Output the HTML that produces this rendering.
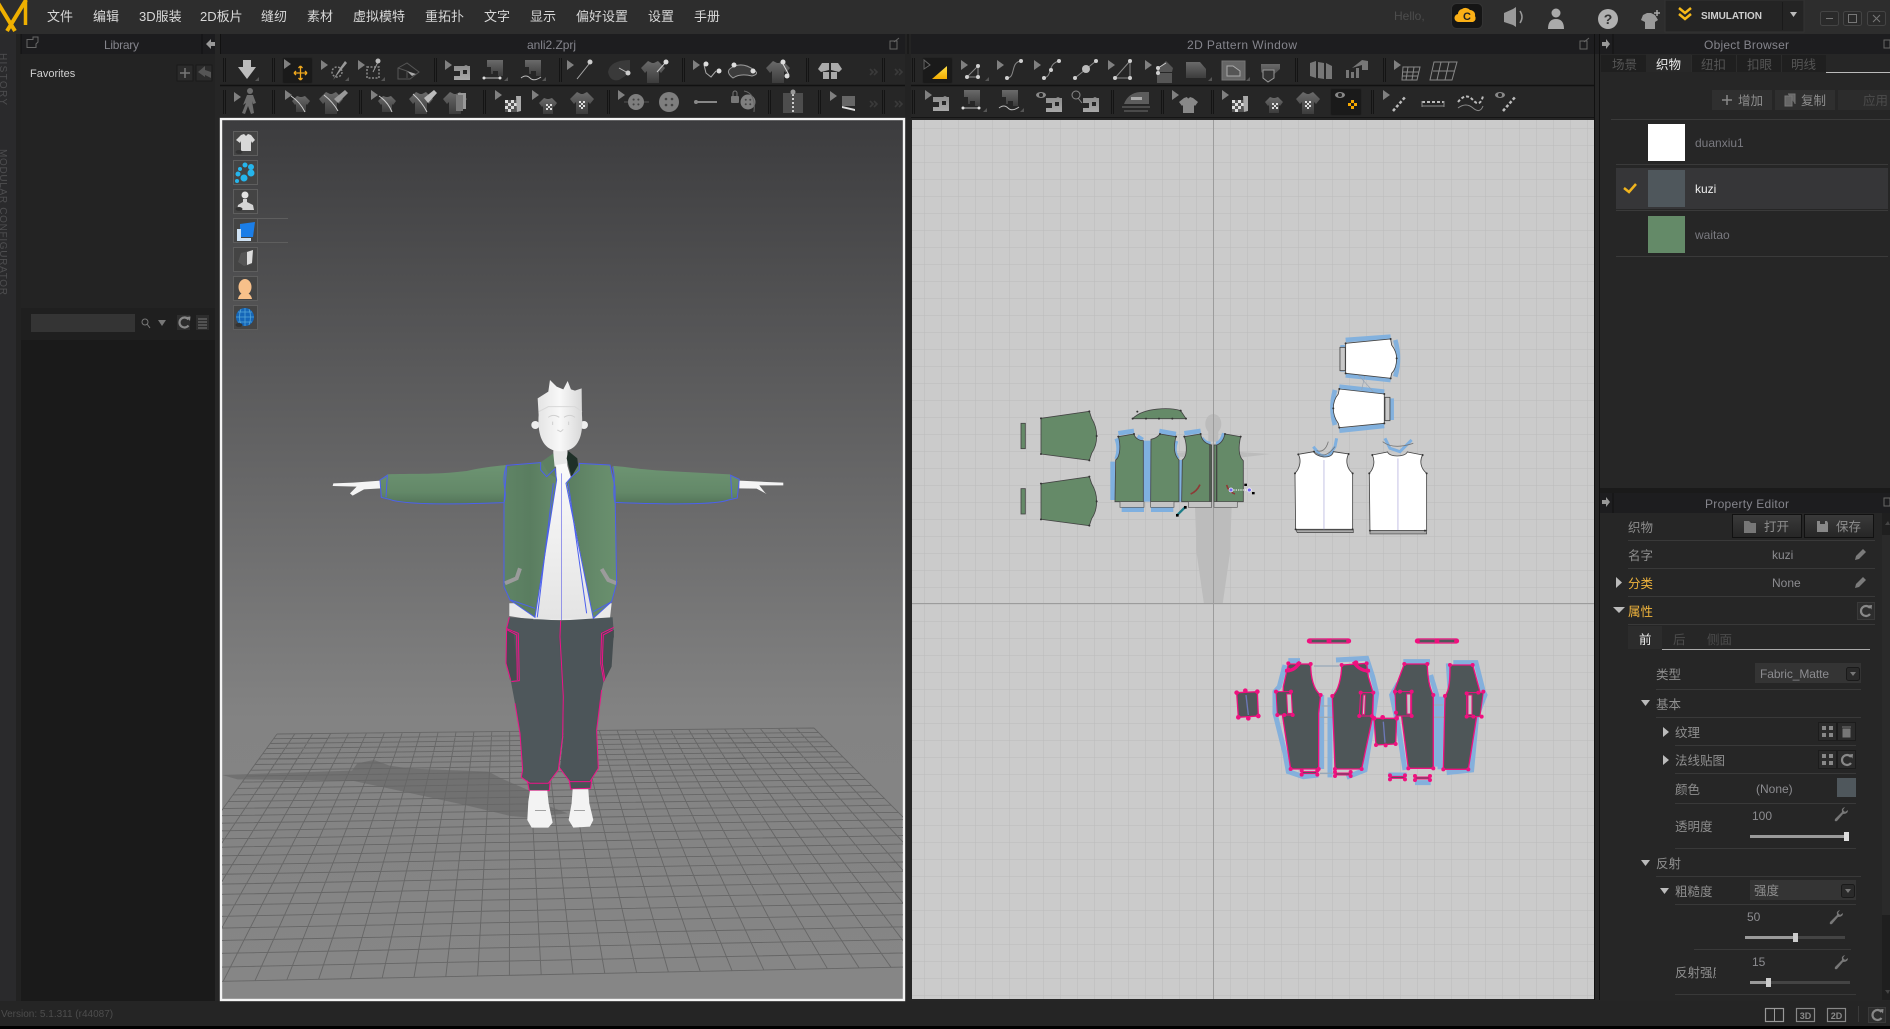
<!DOCTYPE html>
<html><head><meta charset="utf-8"><title>Marvelous Designer</title>
<style>
html,body{margin:0;padding:0;background:#262626;overflow:hidden}
svg{display:block}
text{font-family:"Liberation Sans","WenQuanYi Zen Hei",sans-serif;font-size:12px;fill:#8c8c8c}
.m{font-family:"Liberation Sans","WenQuanYi Zen Hei",sans-serif;font-size:13px;fill:#d8d8d8}
.c{font-size:12.5px;font-family:"Liberation Sans","WenQuanYi Zen Hei",sans-serif;fill:#8e8e8e}
.t{fill:#85858c}
</style></head><body>
<svg width="1890" height="1029" viewBox="0 0 1890 1029" xmlns="http://www.w3.org/2000/svg">
<defs>
<linearGradient id="vp" x1="0" y1="118" x2="0" y2="1001" gradientUnits="userSpaceOnUse"><stop offset="0" stop-color="#3c3c3e"/><stop offset=".68" stop-color="#838383"/><stop offset="1" stop-color="#868686"/></linearGradient>
<linearGradient id="ig" x1="0" y1="0" x2="0" y2="1"><stop offset="0" stop-color="#6a6a6a"/><stop offset="1" stop-color="#3c3c3c"/></linearGradient>
<linearGradient id="il" x1="0" y1="0" x2="0" y2="1"><stop offset="0" stop-color="#8c8c8c"/><stop offset="1" stop-color="#a8a8a8"/></linearGradient>
<linearGradient id="btn" x1="0" y1="0" x2="0" y2="1"><stop offset="0" stop-color="#3a3a3a"/><stop offset="1" stop-color="#262626"/></linearGradient>
<linearGradient id="yl" x1="0" y1="0" x2="0" y2="1"><stop offset="0" stop-color="#ffe04a"/><stop offset="1" stop-color="#f2ab00"/></linearGradient>
<linearGradient id="head" x1="0" y1="0" x2="1" y2="0"><stop offset="0" stop-color="#e4e4e4"/><stop offset=".5" stop-color="#f8f8f8"/><stop offset="1" stop-color="#d8d8d8"/></linearGradient>
<linearGradient id="shirt3d" x1="0" y1="0" x2="0" y2="1"><stop offset="0" stop-color="#fafafa"/><stop offset="1" stop-color="#e4e4e4"/></linearGradient>
<linearGradient id="slv" x1="0" y1="0" x2="0" y2="1"><stop offset="0" stop-color="#6d9472"/><stop offset=".7" stop-color="#638868"/><stop offset="1" stop-color="#54755a"/></linearGradient>
<linearGradient id="jb" x1="0" y1="0" x2="1" y2="0"><stop offset="0" stop-color="#5f8465"/><stop offset=".5" stop-color="#5a7d60"/><stop offset="1" stop-color="#668b6b"/></linearGradient>
<linearGradient id="jc" x1="0" y1="0" x2="1" y2="0"><stop offset="0" stop-color="#5a7d60"/><stop offset=".6" stop-color="#658a6a"/><stop offset="1" stop-color="#6a906e"/></linearGradient>
<pattern id="grid" x="1213" y="604" width="17" height="17" patternUnits="userSpaceOnUse"><path d="M0 0H17M0 0V17" stroke="#bbb" stroke-width="1" fill="none"/></pattern>
<clipPath id="vc"><rect x="222" y="120" width="681" height="879"/></clipPath>
<clipPath id="pc"><rect x="912" y="120" width="682" height="879"/></clipPath>
<path id="cu" d="M0 0v10l7-5z" fill="#808080"/>
<path id="sw" d="M-8-7H2L4-8 6-7H8V7H-8V3H-2V-2H-8Z M1-3V1H5V-3Z" fill="url(#il)" fill-rule="evenodd"/>
<path id="swd" d="M-8-11H8V5H3V0H-2V3H-4V-4H-8Z" fill="url(#ig)"/>
<path id="sh" d="M-5-11-1-9H1L5-11 12-4 8 1 6-1V11H-6V-1L-8 1-12-4Z" fill="url(#ig)"/>
<path id="ss" d="M-4-8-1-7H1L4-8 9-3 6 1 5 0V8H-5V0L-6 1-9-3Z" fill="url(#ig)"/>
<g id="shk"><use href="#sh"/><path d="M-3-2h2v2h-2zM1-2h2v2H1zM-1 0h2v2h-2zM-3 2h2v2h-2zM1 2h2v2H1zM-1 4h2v2h-2z" fill="#ddd"/></g>
<g id="bt"><circle r="10" fill="#7e7e7e"/><circle cx="-3" cy="-3" r="1.3" fill="#444"/><circle cx="3" cy="-3" r="1.3" fill="#444"/><circle cx="-3" cy="3" r="1.3" fill="#444"/><circle cx="3" cy="3" r="1.3" fill="#444"/></g>
<g id="n"><circle r="2" fill="#cfcfcf"/></g>
<path id="chev" d="M0 0 3 3 0 6M4 0 7 3 4 6" fill="none" stroke="#3a3a3a" stroke-width="1.600"/>
<path id="wr" d="M1 12 8 5Q7 1 11 0L9 3 11 5 14 3Q14 7 9 7L3 14Q0 15 1 12Z" fill="#777"/>
<path id="pen" d="M0 12 1 8 8 1 11 4 4 11Z" fill="#7b7b7b"/>
<g id="rf"><path d="M4.500-3A5 5 0 1 0 4.500 3" stroke="#888" stroke-width="2.200" fill="none"/><path d="M2.500-5.500 6.500-6 6-1.500Z" fill="#888"/></g>
</defs>

<!-- base -->
<rect width="1890" height="1029" fill="#262626"/>
<rect x="0" y="0" width="1890" height="34" fill="#2d2d2d"/>
<rect x="0" y="34" width="16" height="967" fill="#2a2a2c"/>
<rect x="16" y="34" width="5" height="967" fill="#222"/>
<rect x="21" y="34" width="194" height="20" fill="#1c1c1e"/>
<rect x="21" y="54" width="194" height="254" fill="#232323"/>
<rect x="21" y="308" width="194" height="32" fill="#1f1f1f"/>
<rect x="21" y="340" width="194" height="661" fill="#1a1a1a"/>
<rect x="220" y="34" width="1380" height="20" fill="#1d1d1f"/>
<rect x="905" y="34" width="6" height="86" fill="#232323"/>
<path d="M908 34V54" stroke="#111"/>
<path d="M220 85.500H905M911 85.500H1594" stroke="#111" stroke-width="1.500"/>
<path d="M220 117.500H905M911 117.500H1594" stroke="#151515"/>
<path d="M21 34V54M220.500 34V54M1594.500 34V1000M1599.500 34V1000" stroke="#111"/>
<rect x="1600" y="34" width="290" height="20" fill="#1d1d1f"/>
<rect x="1600" y="488" width="290" height="5" fill="#1a1a1a"/>
<rect x="1600" y="493" width="290" height="20" fill="#1d1d1f"/>
<rect x="0" y="1001" width="1890" height="25" fill="#252525"/>
<rect x="0" y="1026" width="1890" height="3" fill="#000"/>

<!-- logo -->
<path d="M-2 3 15 31M26 0 7 31" stroke="#efb000" stroke-width="4" fill="none"/>
<path d="M25.500 0V25" stroke="#efb000" stroke-width="3.500" fill="none"/>

<!-- menu -->
<text class="m" x="47" y="21">文件</text><text class="m" x="93" y="21">编辑</text><text class="m" x="139" y="21">3D服装</text><text class="m" x="200" y="21">2D板片</text><text class="m" x="261" y="21">缝纫</text><text class="m" x="307" y="21">素材</text><text class="m" x="353" y="21">虚拟模特</text><text class="m" x="425" y="21">重拓扑</text><text class="m" x="484" y="21">文字</text><text class="m" x="530" y="21">显示</text><text class="m" x="576" y="21">偏好设置</text><text class="m" x="648" y="21">设置</text><text class="m" x="694" y="21">手册</text>

<!-- top right -->
<text x="1394" y="20" style="fill:#4d4d4d">Hello,</text>
<rect x="1451.500" y="3.500" width="31" height="25" rx="5" fill="#151515" stroke="#333"/>
<path d="M1459 22a4 4 0 0 1-1-8 5 5 0 0 1 4-5 6 6 0 0 1 8 1 5 5 0 0 1 5 6 4 4 0 0 1-2 6Z" fill="#fbb016"/>
<text x="1467" y="20" text-anchor="middle" style="font-weight:bold;font-size:11px;fill:#222">C</text>
<path d="M1504 13 1513 9 1516 7V27L1513 25 1504 22Z" fill="#999"/><path d="M1520 11Q1524 17 1520 23" stroke="#999" stroke-width="1.500" fill="none"/>
<circle cx="1556" cy="13" r="4.500" fill="#aaa"/><path d="M1548 29Q1548 19 1556 19 1564 19 1564 29Z" fill="#aaa"/>
<circle cx="1608" cy="19" r="10" fill="#b0b0b0"/><text x="1608" y="24" text-anchor="middle" style="font-weight:bold;font-size:14px;fill:#333">?</text>
<path d="M1643 15 1647 13H1651L1655 15 1658 20 1655 22V29H1645V22L1641 20Z" fill="#9a9a9a"/><path d="M1654 13H1660M1657 10V16" stroke="#aaa" stroke-width="1.500"/>
<rect x="1665" y="0" width="139" height="32" fill="#242424" stroke="#333"/>
<path d="M1679 8 1685 13 1691 8M1679 14 1685 19 1691 14" stroke="#f6b91a" stroke-width="2.500" fill="none"/>
<text x="1701" y="19" textLength="61" style="font-weight:bold;font-size:10px;fill:#cfcfcf">SIMULATION</text>
<path d="M1782.500 2V30" stroke="#1a1a1a"/><path d="M1790 12H1797L1793.500 17Z" fill="#bbb"/>
<g fill="#2a2a2a" stroke="#444"><rect x="1820.500" y="11.500" width="18" height="14" rx="2"/><rect x="1843.500" y="11.500" width="18" height="14" rx="2"/><rect x="1867.500" y="11.500" width="18" height="14" rx="2"/></g>
<path d="M1826 18.500H1833M1848.500 14.500H1856.500V22.500H1848.500ZM1873 15 1880 22M1880 15 1873 22" stroke="#777" fill="none"/>

<!-- vertical labels -->
<text transform="translate(0,53) rotate(90)" textLength="52" style="font-size:10px;fill:#4e4e50">HISTORY</text>
<text transform="translate(0,149) rotate(90)" textLength="146" style="font-size:10px;fill:#4e4e50">MODULAR CONFIGURATOR</text>

<!-- panel titles -->
<path d="M27 39.500H33V37H38V42L36 44V47.500H27Z" fill="none" stroke="#666" stroke-width="1"/>
<text x="104" y="49" class="t" textLength="35">Library</text>
<path d="M206 44 211 39V42H215V46H211V49Z" fill="#999"/><path d="M202 34V54" stroke="#111"/>
<text x="527" y="49" class="t" textLength="49">anli2.Zprj</text>
<path d="M890 41H897V49H890ZM894 42 899 38" stroke="#666" fill="none"/>
<text x="1187" y="49" class="t" textLength="110">2D Pattern Window</text>
<path d="M1580 41H1587V49H1580ZM1584 42 1589 38" stroke="#666" fill="none"/>
<path d="M1602 42H1606V39L1610 44 1606 49V46H1602Z" fill="#999"/><path d="M1613 34V54" stroke="#111"/>
<text x="1704" y="49" class="t" textLength="85">Object Browser</text>
<path d="M1884 40H1890V48H1884Z" stroke="#666" fill="none"/>
<path d="M1602 500H1606V497L1610 502 1606 507V504H1602Z" fill="#999"/><path d="M1613 493V513" stroke="#111"/>
<text x="1705" y="508" class="t" textLength="84">Property Editor</text>
<path d="M1884 498H1890V506H1884Z" stroke="#666" fill="none"/>

<!-- library -->
<text x="30" y="77" style="fill:#d0d0d0;font-size:11px">Favorites</text>
<rect x="177" y="65" width="16" height="16" fill="#2b2b2b" stroke="#1a1a1a"/><path d="M180 73H190M185 68V78" stroke="#777" stroke-width="1.500"/>
<rect x="196" y="65" width="16" height="16" fill="#2b2b2b" stroke="#1a1a1a"/><path d="M198 72 205 66V70L211 72V78L205 75V77Z" fill="#555"/>
<rect x="31" y="314" width="104" height="18" fill="#343434"/>
<circle cx="145" cy="322" r="3" fill="none" stroke="#777"/><path d="M147 324 150 328" stroke="#777"/><path d="M158 320H166L162 326Z" fill="#777"/>
<rect x="177" y="315" width="13" height="15" fill="#2d2d2d"/><use href="#rf" x="184" y="322.500"/>
<rect x="196" y="315" width="13" height="15" fill="#2d2d2d"/><path d="M198 319H207M198 322H207M198 325H207M198 328H207" stroke="#777"/>

<!-- toolbars separators -->
<path d="M223.500 58V82M225.500 58V82M272.500 58V82M274.500 58V82M434.500 58V82M436.500 58V82M559.500 58V82M561.500 58V82M682.500 58V82M684.500 58V82M806.500 58V82M808.500 58V82M882.500 58V82M884.500 58V82M912.500 58V82M914.500 58V82M1295.500 58V82M1297.500 58V82M1383.500 58V82M1385.500 58V82M223.500 90V114M225.500 90V114M272.500 90V114M274.500 90V114M359.500 90V114M361.500 90V114M483.500 90V114M485.500 90V114M607.500 90V114M609.500 90V114M768.500 90V114M770.500 90V114M818.500 90V114M820.500 90V114M882.500 90V114M884.500 90V114M912.500 90V114M914.500 90V114M1111.500 90V114M1113.500 90V114M1161.500 90V114M1163.500 90V114M1211.500 90V114M1213.500 90V114M1371.500 90V114M1373.500 90V114" stroke="#141414"/>

<!-- row 1 viewport -->
<path d="M243 60H251V67H256L247 79 238 67H243Z" fill="#bcbcbc"/><path d="M255 81 259 77V81Z" fill="#555"/>
<rect x="282.500" y="57.500" width="30" height="26" rx="2" fill="#1a1a1a" stroke="#232323"/>
<use href="#cu" x="284" y="59"/>
<path d="M294 73H307M300.500 66V80M294 73 296 71M294 73 296 75M307 73 305 71M307 73 305 75M300.500 66 298.500 68M300.500 66 302.500 68M300.500 80 298.500 78M300.500 80 302.500 78" stroke="#f0a91e" stroke-width="1.300" fill="none"/>
<use href="#cu" x="321" y="60"/><circle cx="337" cy="72" r="5" fill="none" stroke="#888" stroke-dasharray="2 1.500" stroke-width="1.500"/><path d="M333 80 347 63 345 61 340 68Z" fill="#999"/><path d="M345 81 349 77V81Z" fill="#555"/>
<use href="#cu" x="358" y="60"/><path d="M367 67H379V78H367Z" fill="none" stroke="#888" stroke-dasharray="2 1.500" stroke-width="1.500"/><path d="M373 72 378 62" stroke="#999"/><circle cx="378" cy="61" r="2.500" fill="#bbb"/><path d="M381 81 385 77V81Z" fill="#555"/>
<path d="M398 68 407 63 419 72 410 79 398 79Z M398 68 407 71 407 78" fill="none" stroke="#555"/><path d="M407 71 416 74 412 76Z" fill="#aaa"/>
<use href="#cu" x="445" y="60"/><use href="#sw" x="462" y="73"/>
<use href="#swd" x="495" y="71"/><path d="M484 78H500" stroke="#bbb"/><circle cx="484" cy="78" r="1.500" fill="#ddd"/><circle cx="500" cy="78" r="1.500" fill="#ddd"/><path d="M504 81 508 77V81Z" fill="#555"/>
<use href="#swd" x="533" y="71"/><path d="M521 78Q526 74 530 78T541 77" stroke="#bbb" fill="none"/><path d="M542 81 546 77V81Z" fill="#555"/>
<use href="#cu" x="567" y="60"/><path d="M577 79 589 64" stroke="#aaa"/><circle cx="590" cy="62" r="2.500" fill="#ccc"/>
<path d="M608 72Q610 60 630 60V73L619 80Q610 82 608 72Z" fill="#3a3a3a"/><path d="M619 68 628 73" stroke="#bbb"/><circle cx="628" cy="73" r="2.500" fill="#ccc"/>
<use href="#sh" x="653" y="72"/><path d="M657 72 666 62" stroke="#ccc"/><circle cx="666" cy="62" r="2.500" fill="#ddd"/>
<use href="#cu" x="693" y="60"/><path d="M704 65 706 73 711 77 716 71" stroke="#aaa" fill="none"/><circle cx="706" cy="64" r="2.500" fill="#ddd"/><circle cx="719" cy="71" r="2.500" fill="#ddd"/>
<path d="M731 68Q742 61 754 70 760 74 752 76 740 73 733 78 725 72 731 68Z" fill="#3c3c3c" stroke="#999"/><circle cx="734" cy="65" r="2.500" fill="#ddd"/><circle cx="753" cy="71" r="2.500" fill="#ddd"/>
<use href="#sh" x="778" y="72"/><path d="M783 64 789 75" stroke="#ddd"/><circle cx="783" cy="62" r="2.500" fill="#ddd"/><circle cx="787" cy="76" r="2.500" fill="#ddd"/>
<path d="M829 63 822 63 818 69 821 72 829 70ZM831 63 838 63 842 69 839 72 831 70ZM823 72H829V79H823ZM831 72H837V79H831Z" fill="#aaa"/>
<use href="#chev" x="870" y="69"/><use href="#chev" x="895" y="69"/>

<!-- row 2 viewport -->
<use href="#cu" x="234" y="92"/><circle cx="250" cy="91" r="3" fill="#6e6e6e"/><path d="M247 95 253 95 256 103 253 104 252 101 254 113 251 114 248 106 245 114 242 113 246 103 243 105Z" fill="#6e6e6e"/>
<use href="#cu" x="285" y="90"/><use href="#ss" x="301" y="104"/><path d="M291 96Q300 102 305 112" stroke="#ccc" fill="none"/>
<use href="#sh" x="331" y="103"/><path d="M324 95Q333 102 338 111" stroke="#ccc" fill="none"/><path d="M334 99 345 90 348 93 338 103Z" fill="#999"/>
<use href="#cu" x="371" y="90"/><use href="#ss" x="387" y="104"/><path d="M379 96Q388 102 392 112" stroke="#ccc" fill="none"/>
<use href="#sh" x="421" y="103"/><path d="M413 94Q422 102 427 112" stroke="#ccc" fill="none"/><path d="M424 98 434 90 437 93 428 103Z" fill="#bbb"/>
<use href="#sh" x="455" y="103"/><path d="M458 93H466V109H458Z" fill="#999"/><path d="M456 95H463V111H456Z" fill="#777"/>
<use href="#cu" x="495" y="90"/><path d="M505 100H517V112H505Z" fill="#555"/><path d="M505 100h3v3h-3zM511 100h3v3h-3zM508 103h3v3h-3zM514 103h3v3h-3zM505 106h3v3h-3zM511 106h3v3h-3zM508 109h3v3h-3z" fill="#ddd"/><path d="M516 96H521V111L517 112Z" fill="#aaa"/>
<use href="#cu" x="532" y="90"/><use href="#ss" x="548" y="106"/><path d="M546 104h2v2h-2zM550 104h2v2h-2zM548 106h2v2h-2zM546 108h2v2h-2zM550 108h2v2h-2z" fill="#ddd"/>
<use href="#shk" x="582" y="103"/>
<use href="#cu" x="618" y="90"/><g transform="translate(636,102) scale(.8)"><use href="#bt"/></g><path d="M624 102H628M644 102H649" stroke="#555"/>
<use href="#bt" x="669" y="102"/>
<path d="M696 102H717" stroke="#888" stroke-width="2"/><circle cx="696" cy="102" r="2" fill="#888"/>
<rect x="731" y="96" width="8" height="7" rx="1" fill="#777"/><path d="M733 96V93A2 2 0 0 1 737 93V96" stroke="#777" fill="none"/><g transform="translate(748,102) scale(.75)"><use href="#bt"/></g><path d="M744 91Q756 93 754 112" stroke="#666" fill="none"/>
<rect x="783" y="93" width="20" height="20" fill="#4d4d4d"/><path d="M793 90V112" stroke="#ccc" stroke-width="2" stroke-dasharray="2 2"/><circle cx="793" cy="92" r="2.500" fill="#999"/>
<use href="#cu" x="830" y="91"/><path d="M842 96H855V106H842Z" fill="#666"/><path d="M842 106 855 109V111L842 108Z" fill="#ddd"/>
<use href="#chev" x="870" y="101"/><use href="#chev" x="895" y="101"/>

<!-- 2D row 1 -->
<rect x="922.500" y="57.500" width="30" height="26" rx="2" fill="#1a1a1a" stroke="#232323"/>
<path d="M924 60V69L930 65Z" fill="none" stroke="#666"/>
<path d="M932 79 947 66V79Z" fill="url(#yl)"/>
<use href="#cu" x="961" y="60"/><path d="M967 77 978 66V77Z" fill="none" stroke="#888"/><use href="#n" x="967" y="77"/><use href="#n" x="978" y="66"/><use href="#n" x="978" y="77"/><path d="M985 81 989 77V81Z" fill="#555"/>
<use href="#cu" x="997" y="60"/><path d="M1007 78C1016 78 1010 62 1021 61" stroke="#888" fill="none"/><use href="#n" x="1007" y="78"/><use href="#n" x="1021" y="61"/>
<use href="#cu" x="1034" y="60"/><path d="M1044 78C1053 76 1047 64 1059 61" stroke="#888" fill="none"/><use href="#n" x="1044" y="78"/><use href="#n" x="1051" y="70"/><use href="#n" x="1059" y="61"/>
<path d="M1075 78 1096 61" stroke="#888"/><use href="#n" x="1075" y="78"/><use href="#n" x="1096" y="61"/><circle cx="1086" cy="69" r="4" fill="#bbb"/>
<use href="#cu" x="1108" y="60"/><path d="M1115 78H1130L1130 61Z" fill="none" stroke="#888"/><use href="#n" x="1115" y="78"/><use href="#n" x="1130" y="61"/><use href="#n" x="1130" y="78"/>
<use href="#cu" x="1145" y="60"/><path d="M1157 73H1172V83H1157Z" fill="#555"/><path d="M1158 69 1166 61 1173 68 1172 72H1158Z" fill="#555"/><path d="M1158 68 1158 73M1158 68 1166 63" stroke="#ccc"/><use href="#n" x="1158" y="68"/><use href="#n" x="1158" y="73"/>
<path d="M1186 62H1200L1206 69V78H1186Z" fill="url(#ig)"/><path d="M1208 81 1212 77V81Z" fill="#555"/>
<rect x="1222" y="61" width="23" height="19" fill="#666" stroke="#777"/><path d="M1227 66H1233L1240 71V76H1227Z" fill="#555" stroke="#aaa"/><path d="M1246 81 1250 77V81Z" fill="#555"/>
<path d="M1261 64H1280V69L1270 78 1261 72Z" fill="url(#ig)"/><path d="M1263 70H1274V78L1268 82 1263 78Z" fill="#333" stroke="#999"/>
<path d="M1310 63 1316 61V78L1310 76ZM1318 62 1324 63V79L1318 78ZM1326 63 1332 66V79L1326 79Z" fill="#777"/>
<path d="M1346 70H1349V78H1346ZM1351 72H1354V78H1351ZM1356 68H1359V78H1356ZM1352 68 1362 60 1368 61V70H1362V65Z" fill="#777"/>
<use href="#cu" x="1394" y="60"/><path d="M1403 67H1420L1417 80H1402ZM1408 67 1406 80M1414 67 1412 80M1403 72H1419M1402 76H1418" stroke="#888" fill="none"/>
<path d="M1434 62H1457L1452 80H1430ZM1441 62 1437 80M1449 62 1445 80M1433 71H1455" stroke="#888" fill="none"/>

<!-- 2D row 2 -->
<use href="#cu" x="925" y="90"/><use href="#sw" x="941" y="104"/>
<use href="#swd" x="972" y="101"/><path d="M963 108H979" stroke="#bbb"/><circle cx="963" cy="108" r="1.500" fill="#ddd"/><circle cx="979" cy="108" r="1.500" fill="#ddd"/><path d="M983 112 987 108V112Z" fill="#555"/>
<use href="#swd" x="1010" y="101"/><path d="M999 108Q1004 104 1008 108T1019 107" stroke="#bbb" fill="none"/><path d="M1020 112 1024 108V112Z" fill="#555"/>
<ellipse cx="1041" cy="95" rx="5" ry="3" fill="#888"/><circle cx="1041" cy="95" r="2" fill="#222"/><use href="#sw" x="1054" y="105"/>
<circle cx="1076" cy="95" r="4" fill="none" stroke="#888"/><path d="M1078 98 1082 103" stroke="#888"/><use href="#sw" x="1091" y="105"/>
<path d="M1124 104Q1128 93 1140 92H1149V104Z" fill="#5c5c5c"/><path d="M1122 106H1150V108H1122ZM1124 110H1148V112H1124Z" fill="#4a4a4a"/><path d="M1131 97H1142V100H1131Z" fill="#aaa"/>
<use href="#cu" x="1172" y="90"/><path d="M1184 98 1187 97Q1188 100 1190 97L1193 98 1198 102 1195 106 1194 105V113H1183V105L1182 106 1179 102Z" fill="#888"/>
<use href="#cu" x="1222" y="90"/><path d="M1232 100H1244V112H1232Z" fill="#555"/><path d="M1232 100h3v3h-3zM1238 100h3v3h-3zM1235 103h3v3h-3zM1241 103h3v3h-3zM1232 106h3v3h-3zM1238 106h3v3h-3zM1235 109h3v3h-3z" fill="#ddd"/><path d="M1243 96H1248V111L1244 112Z" fill="#aaa"/>
<use href="#ss" x="1274" y="105"/><path d="M1272 103h2v2h-2zM1276 103h2v2h-2zM1274 105h2v2h-2zM1272 107h2v2h-2zM1276 107h2v2h-2z" fill="#ddd"/><use href="#shk" x="1308" y="103"/>
<rect x="1330.500" y="88.500" width="31" height="27" rx="2" fill="#1a1a1a" stroke="#232323"/>
<ellipse cx="1340" cy="95" rx="5" ry="3" fill="#888"/><circle cx="1340" cy="95" r="2" fill="#222"/>
<path d="M1351 100h3v3h-3zM1348 103h3v3h-3zM1354 103h3v3h-3zM1351 106h3v3h-3z" fill="#f6a800"/>
<use href="#cu" x="1383" y="90"/><path d="M1393 111 1406 96" stroke="#bbb" stroke-width="2.500" stroke-dasharray="3 2"/>
<path d="M1422 102H1444" stroke="#bbb" stroke-width="2" stroke-dasharray="3 2"/><path d="M1422 106H1444M1422 101V107M1444 101V107" stroke="#888"/>
<path d="M1458 102Q1466 92 1473 100T1483 96" stroke="#bbb" stroke-width="2" stroke-dasharray="3 2" fill="none"/><path d="M1458 108Q1466 102 1473 108T1483 106" stroke="#888" fill="none"/>
<ellipse cx="1500" cy="95" rx="5" ry="3" fill="#888"/><circle cx="1500" cy="95" r="2" fill="#222"/><path d="M1503 111 1516 96" stroke="#bbb" stroke-width="2.500" stroke-dasharray="3 2"/>

<!-- viewport -->
<rect x="221" y="119" width="683" height="881" fill="url(#vp)" stroke="#f4f4f4" stroke-width="2.400"/>
<g clip-path="url(#vc)">
<path transform="translate(220,700) scale(.4401,.3333)" d="M5 225 300 212 312 190 350 180 385 197 432 206 610 215 640 236 700 270 750 320 790 340 700 352 660 348 560 316 400 270 300 242 40 238Z" fill="#5a5a5a" opacity=".45"/>
<path fill="none" stroke="#666" stroke-width=".9" d="M277 734 814 728M273.600 738.700 818.400 732.400M270.100 743.500 823 737M266.500 748.500 827.700 741.700M262.700 753.700 832.600 746.600M258.900 759 837.600 751.600M254.900 764.500 842.800 756.800M250.800 770.200 848.100 762.100M246.600 776 853.700 767.700M242.200 782.100 859.400 773.400M237.700 788.400 865.300 779.300M232.900 794.900 871.400 785.400M228.100 801.600 877.800 791.800M223 808.600 884.400 798.400M217.800 815.800 891.200 805.200M212.400 823.300 898.300 812.300M206.700 831.100 905.600 819.600M200.800 839.200 913.300 827.300M194.700 847.600 921.300 835.300M188.400 856.400 929.600 843.600M181.700 865.600 938.200 852.200M174.800 875.100 947.200 861.200M167.600 885.100 956.600 870.600M160.100 895.500 966.500 880.500M152.200 906.400 976.800 890.800M143.900 917.800 987.500 901.500M135.300 929.800 998.800 912.800M126.200 942.300 1010.700 924.700M116.600 955.500 1023.100 937.100M106.600 969.400 1036.200 950.200M96 984 1050 964
M277 734 96 984M294.900 733.800 127.800 983.300M312.800 733.600 159.600 982.700M330.700 733.400 191.400 982M348.600 733.200 223.200 981.300M366.500 733 255 980.700M384.400 732.800 286.800 980M402.300 732.600 318.600 979.300M420.200 732.400 350.400 978.700M438.100 732.200 382.200 978M456 732 414 977.300M473.900 731.800 445.800 976.700M491.800 731.600 477.600 976M509.700 731.400 509.400 975.300M527.600 731.200 541.200 974.700M545.500 731 573 974M563.400 730.800 604.800 973.300M581.300 730.600 636.600 972.700M599.200 730.400 668.400 972M617.100 730.200 700.200 971.300M635 730 732 970.700M652.900 729.800 763.800 970M670.800 729.600 795.600 969.300M688.700 729.400 827.400 968.700M706.600 729.200 859.200 968M724.500 729 891 967.300M742.400 728.800 922.800 966.700M760.300 728.600 954.600 966M778.200 728.400 986.400 965.300M796.100 728.200 1018.200 964.700M814 728 1050 964"/>

<!-- figure (zoom 5 coords) -->
<g transform="translate(300,370) scale(.3333)">
<!-- hands -->
<path d="M242 332 160 338 100 340 98 348 170 350 150 370 158 377 192 358 242 355Z" fill="#f4f4f4"/>
<path d="M1318 332 1400 336 1450 338 1450 346 1378 346 1395 368 1400 372 1370 356 1318 355Z" fill="#f4f4f4"/>
<!-- shirt back band -->
<path d="M628 700 935 700 930 745 880 750 700 750 628 738Z" fill="#e9e9e9"/>
<!-- pants -->
<path d="M628 742 620 775 618 880 632 930 645 1000 660 1090 668 1200 664 1222 690 1240 745 1240 775 1200 788 1100 790 980 780 800 782 752Z" fill="#4e575b"/>
<path d="M782 752 775 800 790 980 790 1100 780 1195 810 1235 870 1235 895 1195 890 1080 905 960 942 800 938 742Z" fill="#4c5559"/>
<path d="M682 1232 750 1238 748 1262 688 1262ZM808 1230 875 1230 872 1255 812 1257Z" fill="#4a5256"/>
<path d="M640 780 655 930 630 930 618 880 620 780ZM905 785 942 780 935 890 912 935 905 900Z" fill="#454d50"/>
<g fill="none" stroke="#f0128a" stroke-width="3">
<path d="M628 742 620 775 618 880 632 930M645 1000 660 1090 668 1200 664 1222 690 1240 745 1240 775 1200 788 1100 790 980 780 800 782 752M780 1195 810 1235 870 1235 895 1195 890 1080 905 960"/>
<path d="M682 1232 688 1262 748 1262 750 1238M808 1232 812 1257 872 1255 875 1230"/>
<path d="M618 775 655 790 658 932 634 935M622 780 650 795 652 930"/>
<path d="M942 772 905 790 902 880 912 935M938 780 910 795 907 880 915 930"/>
</g>
<!-- shoes -->
<path d="M690 1262 742 1262 746 1300 758 1358 745 1373 695 1373 682 1350 685 1295Z" fill="#f3f3f3"/>
<path d="M818 1258 865 1258 868 1300 880 1350 870 1370 820 1373 806 1350 815 1300Z" fill="#f3f3f3"/>
<path d="M705 1322H738M822 1322H855" stroke="#888" stroke-width="2"/>
<!-- head -->
<circle cx="706" cy="165" r="12" fill="#eee"/><circle cx="852" cy="165" r="12" fill="#eee"/>
<rect x="760" y="235" width="42" height="55" fill="#e8e8e8"/>
<path d="M716 135C712 190 725 244 782 244 840 244 850 190 846 135L845 55 825 62 813 58 803 33 790 58 770 50 750 30 745 65 713 85Z" fill="url(#head)"/>
<path d="M716 125 745 110 825 110 846 125" stroke="#d8d8d8" stroke-width="3" fill="none"/>
<path d="M745 142Q760 130 778 142M792 142Q810 130 825 142M758 155V165M806 155V165M772 180 782 185 790 178" stroke="#d0d0d0" stroke-width="3" fill="none"/>
<!-- shirt -->
<path d="M768 285 800 280 818 340 882 745 700 748 770 330Z" fill="url(#shirt3d)"/>
<path d="M785 310V750" stroke="#6a6ae8" stroke-width="2"/>
<path d="M805 243 832 265 836 300 815 322 800 265Z" fill="#1f3028"/>
<!-- jacket -->
<path d="M622 285 C590 288 560 290 500 303 C400 315 330 310 262 313 L240 330 244 382 268 387 C300 400 400 406 615 398Z" fill="url(#slv)"/>
<path d="M940 288 C980 290 1010 298 1100 303 L1290 313 1318 328 1310 384 1285 390 C1250 404 1100 404 945 397Z" fill="url(#slv)"/>
<path d="M725 275 620 290 612 400 612 650 630 690 705 742 770 330 765 300 740 285Z" fill="url(#jb)"/>
<path d="M838 280 930 285 945 350 950 640 935 695 880 745 800 340 815 320Z" fill="url(#jc)"/>
<path d="M725 275 760 250 765 300 770 325 745 310Z" fill="#5e8062"/>
<path d="M615 640 650 625 660 595M905 597 925 630 950 640" stroke="#9b9b9b" stroke-width="12" fill="none"/>
<g fill="none" stroke="#4c60ee" stroke-width="3">
<path d="M722 278 620 286 612 400 612 650 630 690 705 742 770 330 765 296 740 320 722 300Z"/>
<path d="M838 280 930 285 945 350 950 640 935 695 880 745 798 340 815 320 838 300Z"/>
<path d="M620 285 C600 340 625 360 612 398 C400 406 300 400 268 388 L244 382 240 330 262 316 258 382M938 290 C950 340 935 360 945 397 C1100 404 1250 404 1285 390 L1312 384 1318 328 1292 316 1296 384"/>
<path d="M632 690 705 715M935 695 880 725M760 340 712 742M805 340 860 730"/>
</g>
</g>
</g>

<!-- side icons -->
<g fill="#444" stroke="#5e5e5e"><rect x="233.500" y="131.500" width="24" height="24"/><rect x="233.500" y="160.500" width="24" height="24"/><rect x="233.500" y="189.500" width="24" height="24"/><rect x="233.500" y="218.500" width="24" height="24"/><rect x="233.500" y="247.500" width="24" height="24"/><rect x="233.500" y="276.500" width="24" height="24"/><rect x="233.500" y="305.500" width="24" height="24"/></g>
<path d="M258 218.500H288M258 242.500H288" stroke="#5e5e5e"/>
<path d="M241 135 244 134 246 136 248 134 251 135 255 140 252 143 251 141V151H241V141L240 143 236 140Z" fill="#d8d8d8"/>
<ellipse cx="239" cy="152" rx="3.500" ry="2" fill="#333"/>
<g fill="#25b5ec"><circle cx="245" cy="165" r="2.500"/><circle cx="251" cy="167" r="3"/><circle cx="251" cy="173" r="3.500"/><circle cx="244" cy="178" r="3.500"/><circle cx="238" cy="174" r="2.500"/><circle cx="237" cy="181" r="2"/><circle cx="240" cy="169" r="2"/></g>
<circle cx="245" cy="195" r="3.500" fill="#e4e4e4"/><path d="M243 199H247V202L253 205 254 210H237L238 205 243 202Z" fill="#d4d4d4"/><ellipse cx="239" cy="209" rx="3.500" ry="2" fill="#333"/>
<path d="M240 224 255 222 253 237H240Z" fill="#1b7ee8"/><path d="M237 229H241V238H251V241H237Z" fill="#cfe2f4"/>
<path d="M241 253 253 250 252 264 244 266 238 262Z" fill="#555"/><path d="M247 252 253 250 252 263 247 265Z" fill="#ddd"/>
<ellipse cx="245" cy="287" rx="6.500" ry="8" fill="#f7c08a"/><path d="M238 299Q239 294 243 293H247Q251 294 252 299Z" fill="#f7c08a"/>
<circle cx="245" cy="317" r="9" fill="#1566b8"/><path d="M236 317H254M245 308V326M238 312H252M238 322H252M241 309Q238 317 241 325M249 309Q252 317 249 325" stroke="#53a5d8" stroke-width=".8" fill="none"/><ellipse cx="239" cy="325" rx="3.500" ry="2" fill="#333"/>

<!-- 2D window -->
<g clip-path="url(#pc)">
<rect x="912" y="120" width="682" height="879" fill="#cbcbcb"/>
<rect x="912" y="120" width="682" height="879" fill="url(#grid)"/>

<!-- avatar silhouette -->
<g transform="translate(1000,320) scale(.3333)" fill="#bcbcbc">
<ellipse cx="640" cy="312" rx="24" ry="30"/><rect x="625" y="335" width="30" height="30"/>
<path d="M590 370H690L700 395 812 402 700 415 695 560 690 700 668 852H612L590 700 585 560 580 415 480 402 580 395Z"/>
</g>
<path d="M912 603.500H1594" stroke="#9c9c9c"/><path d="M1213.500 120V999" stroke="#9c9c9c"/>

<!-- jacket pattern (zoom 6) -->
<g transform="translate(1000,320) scale(.3333)">
<rect x="430" y="362" width="22" height="183" fill="#7fb0e0"/><rect x="537" y="420" width="10" height="125" fill="#7fb0e0"/>
<g fill="none" stroke="#7fb0e0" stroke-width="14">
<path d="M355 340 402 333M412 350 428 360M478 333 528 342M350 355Q362 385 350 418M338 425V540M365 569H432M453 569H520M528 362Q516 395 533 418M553 340 602 333M604 355Q615 372 632 372M648 372Q665 370 673 340 722 342M725 362Q715 395 735 422V538M570 569H630M645 569H710M736 500 755 510 770 525M540 595 560 565 640 558"/>
</g>
<g fill="#658a68" stroke="#444" stroke-width="2.500">
<path d="M123 295 268 274 275 295Q290 320 290 348 290 378 275 400L268 421 123 402Z"/>
<path d="M123 491 268 470 275 491Q290 516 290 544 290 574 275 596L268 617 123 598Z"/>
<rect x="63" y="310" width="13" height="76"/><rect x="63" y="506" width="13" height="76"/>
<path d="M398 296C430 262 510 262 542 272L558 296Z"/>
<path d="M355 350 402 342C405 355 418 362 430 362V545H345L347 420C362 410 362 372 355 350Z"/>
<path d="M453 358Q470 355 480 342L528 350C520 380 522 405 537 420V545H452Z"/>
<path d="M553 350 602 342C605 362 618 372 635 375V545H545L547 420C562 410 562 378 553 350Z"/>
<path d="M650 375C665 370 672 355 675 342L722 350C715 380 715 410 730 422V545H642V375Z"/>
</g>
<path d="M360 545H432V562H360ZM452 545H522V562H452ZM565 545H635V562H565ZM642 545H712V562H642Z" fill="#c4c4c4" stroke="#555" stroke-width="2"/>
<path d="M630 375V545M650 375V545" stroke="#444" stroke-width="4"/>
<path d="M572 522Q590 515 600 494M680 495Q685 515 705 522" stroke="#8e3a36" stroke-width="5" fill="none"/>
<path d="M532 585 555 562" stroke="#1f7d88" stroke-width="7"/><rect x="528" y="582" width="8" height="8"/><rect x="552" y="558" width="8" height="8"/>
<rect x="733" y="491" width="8" height="7"/><rect x="756" y="516" width="8" height="7"/>
<path d="M693 510H748" stroke="#fff" stroke-width="3" stroke-dasharray="4 3"/><circle cx="693" cy="510" r="6" fill="#7569f0" stroke="#fff" stroke-width="2"/><circle cx="748" cy="510" r="6" fill="#7569f0" stroke="#fff" stroke-width="2"/>
<g fill="#333"><circle cx="123" cy="295" r="3"/><circle cx="268" cy="274" r="3"/><circle cx="290" cy="348" r="3"/><circle cx="268" cy="421" r="3"/><circle cx="123" cy="402" r="3"/><circle cx="123" cy="491" r="3"/><circle cx="268" cy="470" r="3"/><circle cx="290" cy="544" r="3"/><circle cx="268" cy="617" r="3"/><circle cx="123" cy="598" r="3"/><circle cx="412" cy="275" r="3"/><circle cx="542" cy="272" r="3"/><circle cx="398" cy="296" r="3"/><circle cx="558" cy="296" r="3"/><circle cx="438" cy="296" r="3"/><circle cx="477" cy="296" r="3"/><circle cx="517" cy="296" r="3"/><circle cx="355" cy="350" r="3"/><circle cx="402" cy="342" r="3"/><circle cx="480" cy="342" r="3"/><circle cx="528" cy="350" r="3"/><circle cx="553" cy="350" r="3"/><circle cx="602" cy="342" r="3"/><circle cx="675" cy="342" r="3"/><circle cx="722" cy="350" r="3"/></g>
<!-- white sleeves -->
<g fill="none" stroke="#7fb0e0" stroke-width="14" opacity=".95"><path d="M1037 60 1172 50M1186 60Q1202 115 1186 170M1172 180 1037 166M1028 75V155"/><path d="M1018 200 1153 215M1175 235V300M1153 318 1018 332M1005 210Q990 265 1005 315"/></g>
<path d="M1075 165 1120 215M1095 165 1085 210" stroke="#98a4b4" stroke-width="2"/>
<g fill="#fff" stroke="#444" stroke-width="2.500">
<path d="M1037 70 1172 57 1175 75Q1190 95 1190 115 1190 145 1175 160L1172 175 1037 160Z"/>
<path d="M1018 207 1153 222V310L1018 323 1015 310Q1000 290 1000 265 1000 240 1015 222Z"/>
<rect x="1020" y="82" width="16" height="70" fill="#c8c8c8"/><rect x="1155" y="232" width="15" height="70" fill="#c8c8c8"/>
</g>
<!-- white bodies -->
<g fill="none" stroke="#7fb0e0" stroke-width="9"><path d="M940 380 960 405 985 410 1005 380 1010 355M1155 355 1170 385 1200 395 1235 360"/></g>
<g fill="#fff" stroke="#444" stroke-width="2.500">
<path d="M895 403 942 395C945 410 995 422 1000 395L1046 402C1036 420 1040 445 1058 460V628H887L885 460C900 445 905 420 895 403Z"/>
<path d="M1117 405 1163 396C1168 412 1215 412 1222 396L1268 405C1258 423 1262 445 1280 460V632H1110L1108 460C1122 445 1126 423 1117 405Z"/>
</g>
<path d="M945 397Q975 420 1005 380M950 392Q975 400 985 365M1148 365Q1180 390 1240 370" stroke="#777" stroke-width="2.500" fill="none"/>
<path d="M972 420V628M1194 415V632" stroke="#a8a4d8" stroke-width="2"/>
<path d="M888 630H1060V638H892ZM1110 632H1280V642H1110Z" fill="#aaa" stroke="#444" stroke-width="2"/>
<g fill="#333"><circle cx="1037" cy="70" r="3"/><circle cx="1172" cy="57" r="3"/><circle cx="1190" cy="115" r="3"/><circle cx="1172" cy="175" r="3"/><circle cx="1037" cy="160" r="3"/><circle cx="1018" cy="207" r="3"/><circle cx="1153" cy="222" r="3"/><circle cx="1153" cy="310" r="3"/><circle cx="1018" cy="323" r="3"/><circle cx="1000" cy="265" r="3"/><circle cx="895" cy="403" r="3"/><circle cx="942" cy="395" r="3"/><circle cx="1046" cy="402" r="3"/><circle cx="1058" cy="460" r="3"/><circle cx="885" cy="460" r="3"/><circle cx="887" cy="628" r="3"/><circle cx="1058" cy="628" r="3"/><circle cx="1117" cy="405" r="3"/><circle cx="1268" cy="405" r="3"/><circle cx="1280" cy="460" r="3"/><circle cx="1108" cy="460" r="3"/><circle cx="1110" cy="632" r="3"/><circle cx="1275" cy="632" r="3"/></g>
</g>

<!-- pants pattern (zoom 7) -->
<g transform="translate(1220,620) scale(.3333)">
<g fill="none" stroke="#84b0dc" stroke-width="15">
<path d="M205 122H240M195 135 178 200 165 215V280L195 400 205 455 250 470 295 465M305 225V447M330 232V450 380 472M348 120 440 115 458 170 470 220 460 290 435 450 380 472"/>
<path d="M550 125H630M535 190 515 225 535 320 555 450M632 165 650 225V440M665 230 660 448M685 130 690 210M700 128H768L790 215 795 225 770 290 755 450 680 458"/>
<path d="M505 465H560M585 488H632"/>
</g>
<path d="M282 138H358M305 258H335M300 292H340M300 460H345M640 255H670M640 292H675" stroke="#98a8b8" stroke-width="4"/>
<g fill="#4e5658" stroke="#f0107f" stroke-width="4">
<path d="M205 132H272C272 170 280 210 302 225L296 280V447H212L188 290 190 200Z"/>
<path d="M365 135 440 130 445 170 460 220 458 290 425 447H345L337 228C355 215 365 170 365 135Z"/>
<path d="M553 132H622C622 170 630 210 640 225V445H565L545 290 522 215Z"/>
<path d="M690 135H758L780 215 770 290 745 448H670L675 228C690 210 690 170 690 135Z"/>
<path d="M50 218 112 215 115 288 55 292Z"/>
<path d="M462 295 530 295 527 372 468 375Z"/>
</g>
<g fill="#4e5658" stroke="#f0107f" stroke-width="3"><path d="M168 215H213L218 285H172ZM422 218H460L456 288H418ZM525 215H575V288H528ZM740 218H790L780 290H740Z"/></g>
<path d="M200 222H214L217 280H203ZM430 225H436L434 283H427ZM560 222H572V282H561ZM744 225H756V284H744Z" fill="#c8c8c8" stroke="#f0107f" stroke-width="3"/>
<path d="M78 225 85 285M490 305 495 368" stroke="#6c78b8" stroke-width="4"/>
<path d="M268 57H386M268 69H386M592 57H710M592 69H710" stroke="#f0107f" stroke-width="3.500"/>
<rect x="268" y="59" width="118" height="8" fill="#4e5658"/><rect x="592" y="59" width="118" height="8" fill="#4e5658"/>
<path d="M510 472H555M585 474H630M245 458H292M345 462H392" stroke="#f0107f" stroke-width="9"/>
<path d="M514 472H551M589 474H626M249 458H288M349 462H388" stroke="#4e5658" stroke-width="3"/>
<path d="M195 152Q225 155 240 125M400 125Q420 155 450 152" stroke="#f0107f" stroke-width="10" fill="none"/>
<g fill="#f0107f">
<circle cx="205" cy="150" r="7"/><circle cx="235" cy="132" r="7"/><circle cx="408" cy="128" r="7"/><circle cx="442" cy="152" r="7"/>
<circle cx="268" cy="63" r="7.500"/><circle cx="327" cy="63" r="7.500"/><circle cx="386" cy="63" r="7.500"/><circle cx="592" cy="63" r="7.500"/><circle cx="651" cy="63" r="7.500"/><circle cx="710" cy="63" r="7.500"/>
<circle cx="50" cy="218" r="7"/><circle cx="76" cy="212" r="7"/><circle cx="112" cy="215" r="7"/><circle cx="115" cy="288" r="7"/><circle cx="85" cy="295" r="7"/><circle cx="55" cy="292" r="7"/>
<circle cx="205" cy="130" r="6"/><circle cx="272" cy="132" r="6"/><circle cx="302" cy="225" r="6"/><circle cx="212" cy="447" r="6"/><circle cx="296" cy="447" r="6"/><circle cx="168" cy="215" r="6"/><circle cx="213" cy="215" r="6"/><circle cx="172" cy="285" r="6"/><circle cx="218" cy="285" r="6"/><circle cx="193" cy="285" r="6"/>
<circle cx="365" cy="135" r="6"/><circle cx="440" cy="130" r="6"/><circle cx="337" cy="228" r="6"/><circle cx="345" cy="447" r="6"/><circle cx="425" cy="447" r="6"/><circle cx="422" cy="218" r="6"/><circle cx="460" cy="218" r="6"/><circle cx="418" cy="288" r="6"/><circle cx="456" cy="288" r="6"/>
<circle cx="462" cy="295" r="7"/><circle cx="488" cy="292" r="7"/><circle cx="530" cy="295" r="7"/><circle cx="527" cy="372" r="6"/><circle cx="497" cy="376" r="6"/><circle cx="468" cy="375" r="6"/>
<circle cx="553" cy="132" r="6"/><circle cx="622" cy="132" r="6"/><circle cx="640" cy="225" r="6"/><circle cx="565" cy="445" r="6"/><circle cx="640" cy="445" r="6"/><circle cx="525" cy="215" r="6"/><circle cx="575" cy="215" r="6"/><circle cx="528" cy="278" r="6"/><circle cx="575" cy="288" r="6"/><circle cx="540" cy="215" r="6"/>
<circle cx="690" cy="135" r="6"/><circle cx="758" cy="135" r="6"/><circle cx="675" cy="228" r="6"/><circle cx="670" cy="448" r="6"/><circle cx="745" cy="448" r="6"/><circle cx="740" cy="220" r="6"/><circle cx="790" cy="215" r="6"/><circle cx="740" cy="290" r="6"/><circle cx="785" cy="290" r="6"/><circle cx="760" cy="290" r="6"/><circle cx="775" cy="218" r="6"/>
<circle cx="245" cy="452" r="6"/><circle cx="245" cy="464" r="6"/><circle cx="292" cy="452" r="6"/><circle cx="292" cy="464" r="6"/><circle cx="345" cy="456" r="6"/><circle cx="345" cy="468" r="6"/><circle cx="392" cy="456" r="6"/><circle cx="392" cy="468" r="6"/>
<circle cx="510" cy="466" r="6"/><circle cx="510" cy="478" r="6"/><circle cx="555" cy="466" r="6"/><circle cx="555" cy="478" r="6"/><circle cx="585" cy="468" r="6"/><circle cx="585" cy="480" r="6"/><circle cx="630" cy="468" r="6"/><circle cx="630" cy="480" r="6"/>
</g>
</g>
</g>

<!-- Object browser -->
<rect x="1601" y="55" width="45" height="17" fill="#1f1f1f"/><rect x="1646" y="54" width="45" height="18" fill="#282828"/><rect x="1691" y="55" width="45" height="17" fill="#1f1f1f"/><rect x="1736" y="55" width="45" height="17" fill="#1f1f1f"/><rect x="1781" y="55" width="45" height="17" fill="#1f1f1f"/>
<path d="M1691.500 55V72M1736.500 55V72M1781.500 55V72" stroke="#2c2c2c"/>
<path d="M1826 72.500H1890" stroke="#bbb"/>
<text class="c" x="1612" y="69" style="fill:#555">场景</text><text class="c" x="1656" y="69" style="fill:#ededed">织物</text><text class="c" x="1701" y="69" style="fill:#555">纽扣</text><text class="c" x="1747" y="69" style="fill:#555">扣眼</text><text class="c" x="1791" y="69" style="fill:#555">明线</text>
<rect x="1712" y="90" width="60" height="20" fill="#2f2f2f"/><rect x="1775" y="90" width="60" height="20" fill="#2f2f2f"/><rect x="1838" y="90" width="52" height="20" fill="#2c2c2c"/>
<path d="M1722 100H1732M1727 95V105" stroke="#888" stroke-width="1.500"/><text class="c" x="1738" y="105">增加</text>
<path d="M1785 96H1792V106H1785ZM1788 94H1795V104" stroke="#777" fill="#666"/><text class="c" x="1801" y="105">复制</text>
<text class="c" x="1863" y="105" style="fill:#4c4c4c">应用</text>
<path d="M1611 119.500H1890M1616 164.500H1888M1616 210.500H1888M1616 256.500H1888" stroke="#3a3a3a"/>
<rect x="1648" y="124" width="37" height="37" fill="#fff"/>
<text x="1695" y="147" style="font-size:12px;fill:#7a7a80">duanxiu1</text>
<rect x="1616" y="168" width="272" height="41" fill="#363638"/>
<path d="M1624 188 1629 192 1636 184" stroke="#f0b41e" stroke-width="2.500" fill="none"/>
<rect x="1648" y="170" width="37" height="37" fill="#4f575c"/>
<text x="1695" y="193" style="font-size:12px;fill:#eee">kuzi</text>
<rect x="1648" y="216" width="37" height="37" fill="#648a68"/>
<text x="1695" y="239" style="font-size:12px;fill:#7a7a80">waitao</text>

<!-- Property editor -->
<text class="c" x="1628" y="532">织物</text>
<rect x="1732.500" y="514.500" width="69" height="23" fill="url(#btn)" stroke="#111"/><rect x="1804.500" y="514.500" width="69" height="23" fill="url(#btn)" stroke="#111"/>
<path d="M1744 521H1749L1751 523H1756V533H1744Z" fill="#777"/><text class="c" x="1764" y="531">打开</text>
<path d="M1817 521H1827L1828 523V532H1817Z" fill="#888"/><rect x="1820" y="521" width="5" height="3" fill="#333"/><text class="c" x="1836" y="531">保存</text>
<path d="M1628 540.500H1875M1628 568.500H1875M1628 596.500H1875M1628 624.500H1875M1656 689.500H1861M1656 717.500H1861M1675 745.500H1856M1675 773.500H1856M1675 803.500H1856M1675 848.500H1856M1656 876.500H1861M1675 904.500H1856M1694 949.500H1851M1675 994.500H1856" stroke="#393939"/>
<text class="c" x="1628" y="560">名字</text><text x="1772" y="559" style="fill:#8c8c90">kuzi</text><use href="#pen" x="1855" y="548"/>
<path d="M1616 577 1622 582.500 1616 588Z" fill="#bbb"/><text class="c" x="1628" y="588" style="fill:#f0b43c">分类</text><text x="1772" y="587" style="fill:#8c8c90">None</text><use href="#pen" x="1855" y="576"/>
<path d="M1613 607H1625L1619 613Z" fill="#bbb"/><text class="c" x="1628" y="616" style="fill:#f0b43c">属性</text>
<rect x="1857.500" y="602.500" width="17" height="17" fill="#2d2d2d" stroke="#3a3a3a"/><use href="#rf" x="1865.500" y="611"/>
<rect x="1628" y="626" width="34" height="23" fill="#2c2c2c"/>
<path d="M1662 649.500H1870" stroke="#aaa"/>
<text class="c" x="1639" y="644" style="fill:#eee">前</text><text class="c" x="1673" y="644" style="fill:#4c4c4c">后</text><text class="c" x="1707" y="644" style="fill:#4c4c4c">侧面</text>
<text class="c" x="1656" y="679">类型</text>
<rect x="1755" y="663" width="106" height="20" fill="#343434"/><text x="1760" y="678" textLength="69" style="fill:#8c8c90">Fabric_Matte</text>
<rect x="1846.500" y="667.500" width="13" height="13" rx="2" fill="#2a2a2a" stroke="#1a1a1a"/><path d="M1850 672H1856L1853 676Z" fill="#777"/>
<path d="M1641 700H1650L1645.500 706Z" fill="#bbb"/><text class="c" x="1656" y="709">基本</text>
<path d="M1663 727 1669 732 1663 737Z" fill="#bbb"/><text class="c" x="1675" y="737">纹理</text>
<g fill="#2b2b2b" stroke="#1c1c1c"><rect x="1818.500" y="722.500" width="18" height="18"/><rect x="1837.500" y="722.500" width="18" height="18"/><rect x="1818.500" y="750.500" width="18" height="18"/><rect x="1837.500" y="750.500" width="18" height="18"/></g>
<path d="M1822 726h4v4h-4zM1829 726h4v4h-4zM1822 733h4v4h-4zM1829 733h4v4h-4zM1822 754h4v4h-4zM1829 754h4v4h-4zM1822 761h4v4h-4zM1829 761h4v4h-4z" fill="#888"/>
<path d="M1842 727H1851M1843 729H1850V737H1843Z" fill="#777" stroke="#777"/><use href="#rf" x="1846.500" y="760"/>
<path d="M1663 755 1669 760 1663 765Z" fill="#bbb"/><text class="c" x="1675" y="765">法线贴图</text>
<text class="c" x="1675" y="794">颜色</text><text x="1756" y="793" style="fill:#8c8c90">(None)</text><rect x="1837" y="778" width="19" height="19" fill="#4f575c"/>
<text class="c" x="1675" y="831">透明度</text><text x="1752" y="820" style="fill:#8c8c90">100</text><use href="#wr" x="1834" y="807"/>
<rect x="1750" y="835" width="98" height="3" fill="#9a9a9a"/><rect x="1844" y="832" width="5" height="9" fill="#ddd"/>
<path d="M1641 860H1650L1645.500 866Z" fill="#bbb"/><text class="c" x="1656" y="868">反射</text>
<path d="M1660 888H1669L1664.500 894Z" fill="#bbb"/><text class="c" x="1675" y="896">粗糙度</text>
<rect x="1750" y="880" width="106" height="20" fill="#343434"/><text class="c" x="1754" y="895">强度</text>
<rect x="1841.500" y="884.500" width="13" height="13" rx="2" fill="#2a2a2a" stroke="#1a1a1a"/><path d="M1845 889H1851L1848 893Z" fill="#777"/>
<text x="1747" y="921" style="fill:#8c8c90">50</text><use href="#wr" x="1829" y="910"/>
<rect x="1745" y="936" width="100" height="3" fill="#444"/><rect x="1745" y="936" width="50" height="3" fill="#9a9a9a"/><rect x="1793" y="933" width="5" height="9" fill="#ccc"/>
<text x="1752" y="966" style="fill:#8c8c90">15</text><use href="#wr" x="1834" y="955"/>
<rect x="1750" y="981" width="100" height="3" fill="#444"/><rect x="1750" y="981" width="18" height="3" fill="#9a9a9a"/><rect x="1766" y="978" width="5" height="9" fill="#ccc"/>
<svg x="1675" y="960" width="41" height="24"><text class="c" x="0" y="17">反射强度</text></svg>
<!-- scrollbar -->
<rect x="1882" y="513" width="8" height="487" fill="#1f1f1f"/><rect x="1882" y="535" width="8" height="380" fill="#2a2a2a"/>
<path d="M1885 525 1888 521 1890 525ZM1885 990 1888 994 1890 990Z" fill="#444"/>

<!-- status bar -->
<text x="1" y="1017" style="font-size:10px;fill:#4d4d4d">Version: 5.1.311 (r44087)</text>
<rect x="1765.500" y="1008.500" width="18" height="13" fill="none" stroke="#999" stroke-width="1.200"/><path d="M1774.500 1008V1022" stroke="#999"/>
<rect x="1796.500" y="1008.500" width="18" height="13" fill="none" stroke="#888" stroke-width="1.200"/><text x="1805.500" y="1019" text-anchor="middle" style="font-size:9px;font-weight:bold;fill:#888">3D</text>
<rect x="1827.500" y="1008.500" width="18" height="13" fill="none" stroke="#888" stroke-width="1.200"/><text x="1836.500" y="1019" text-anchor="middle" style="font-size:9px;font-weight:bold;fill:#888">2D</text>
<path d="M1858.500 1006V1022" stroke="#3a3a3a"/>
<rect x="1868.500" y="1007.500" width="17" height="15" fill="#2d2d2d" stroke="#3a3a3a"/><use href="#rf" x="1877" y="1015"/>
</svg>
</body></html>
